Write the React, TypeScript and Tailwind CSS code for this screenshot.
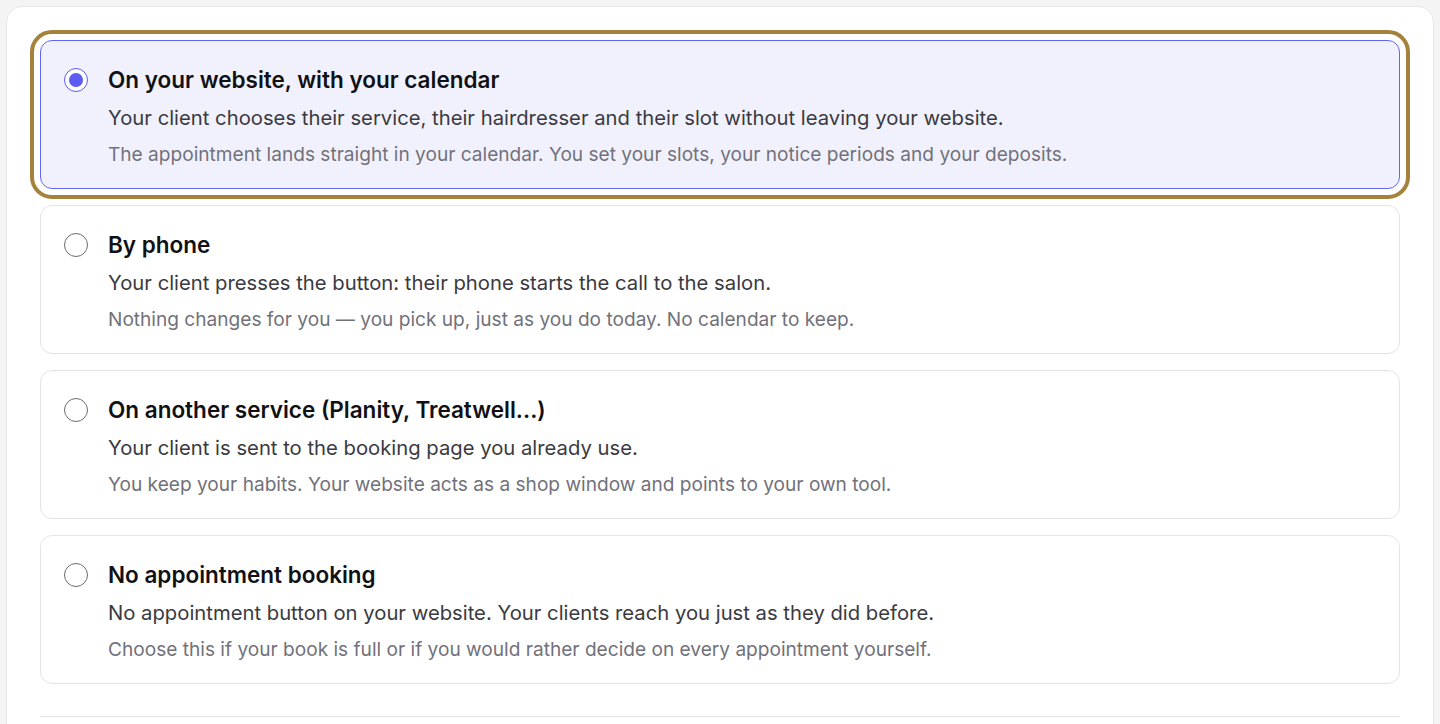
import React, { useState } from 'react';

type Option = {
  id: string;
  title: string;
  line: string;
  note: string;
};

const options: Option[] = [
  {
    id: 'website',
    title: 'On your website, with your calendar',
    line: 'Your client chooses their service, their hairdresser and their slot without leaving your website.',
    note: 'The appointment lands straight in your calendar. You set your slots, your notice periods and your deposits.',
  },
  {
    id: 'phone',
    title: 'By phone',
    line: 'Your client presses the button: their phone starts the call to the salon.',
    note: 'Nothing changes for you — you pick up, just as you do today. No calendar to keep.',
  },
  {
    id: 'external',
    title: 'On another service (Planity, Treatwell...)',
    line: 'Your client is sent to the booking page you already use.',
    note: 'You keep your habits. Your website acts as a shop window and points to your own tool.',
  },
  {
    id: 'none',
    title: 'No appointment booking',
    line: 'No appointment button on your website. Your clients reach you just as they did before.',
    note: 'Choose this if your book is full or if you would rather decide on every appointment yourself.',
  },
];

const Radio = ({ checked }: { checked: boolean }) => (
  <span
    className={
      checked
        ? 'mt-1 flex h-6 w-6 shrink-0 items-center justify-center rounded-full border-[1.5px] border-[#5b5cf0] bg-white'
        : 'mt-1 flex h-6 w-6 shrink-0 items-center justify-center rounded-full border-[1.5px] border-[#6b6b6b] bg-white'
    }
  >
    {checked && <span className="h-[14px] w-[14px] rounded-full bg-[#5b5cf0]" />}
  </span>
);

const App = () => {
  const [selected, setSelected] = useState('website');

  return (
    <div className="min-h-screen bg-[#f4f4f5] p-[6px] font-['Inter',sans-serif]">
      <div className="rounded-2xl border border-[#e7e7e9] bg-white px-[33px] pt-[33px] pb-10">
        <div className="flex flex-col gap-4">
          {options.map((o) => {
            const active = selected === o.id;
            return (
              <label
                key={o.id}
                onClick={() => setSelected(o.id)}
                className={
                  active
                    ? 'flex cursor-pointer gap-5 rounded-xl border border-[#6366f1] bg-[#f1f1fe] pt-[23px] pr-6 pb-[22px] pl-[23px] outline-[4px] outline-offset-[6px] outline-[#a5823b] outline-solid'
                    : 'flex cursor-pointer gap-5 rounded-xl border border-[#e4e4e7] bg-white pt-[23px] pr-6 pb-[22px] pl-[23px]'
                }
              >
                <Radio checked={active} />
                <div className="flex flex-col">
                  <span className="text-[22.5px] leading-8 font-semibold text-[#111113]">{o.title}</span>
                  <span className="mt-2 text-[20.25px] leading-7 text-[#3a3a40]">{o.line}</span>
                  <span className="mt-[10px] text-[19.1px] leading-6 text-[#71717a]">{o.note}</span>
                </div>
              </label>
            );
          })}
        </div>
        <div className="mt-8 border-t border-[#e4e4e7]" />
      </div>
    </div>
  );
};

export default App;
